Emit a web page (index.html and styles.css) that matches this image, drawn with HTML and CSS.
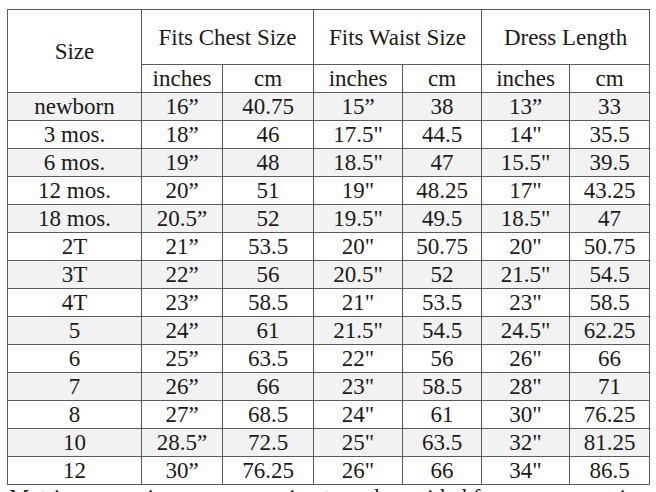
FILE: index.html
```html
<!DOCTYPE html>
<html>
<head>
<meta charset="utf-8">
<link rel="stylesheet" href="styles.css">
</head>
<body>
<div class="page">
<table class="sizes">
  <colgroup>
    <col class="c-size"><col class="c-ci"><col class="c-cc"><col class="c-wi"><col class="c-wc"><col class="c-di"><col class="c-dc">
  </colgroup>
  <thead>
    <tr class="h1">
      <th rowspan="2">Size</th>
      <th colspan="2">Fits Chest Size</th>
      <th colspan="2">Fits Waist Size</th>
      <th colspan="2">Dress Length</th>
    </tr>
    <tr class="h2">
      <th>inches</th><th>cm</th><th>inches</th><th>cm</th><th>inches</th><th>cm</th>
    </tr>
  </thead>
  <tbody>
    <tr><td>newborn</td><td>16”</td><td>40.75</td><td>15”</td><td>38</td><td>13”</td><td>33</td></tr>
    <tr><td>3 mos.</td><td>18”</td><td>46</td><td>17.5"</td><td>44.5</td><td>14"</td><td>35.5</td></tr>
    <tr><td>6 mos.</td><td>19”</td><td>48</td><td>18.5"</td><td>47</td><td>15.5"</td><td>39.5</td></tr>
    <tr><td>12 mos.</td><td>20”</td><td>51</td><td>19"</td><td>48.25</td><td>17"</td><td>43.25</td></tr>
    <tr><td>18 mos.</td><td>20.5”</td><td>52</td><td>19.5"</td><td>49.5</td><td>18.5"</td><td>47</td></tr>
    <tr><td>2T</td><td>21”</td><td>53.5</td><td>20"</td><td>50.75</td><td>20"</td><td>50.75</td></tr>
    <tr><td>3T</td><td>22”</td><td>56</td><td>20.5"</td><td>52</td><td>21.5"</td><td>54.5</td></tr>
    <tr><td>4T</td><td>23”</td><td>58.5</td><td>21"</td><td>53.5</td><td>23"</td><td>58.5</td></tr>
    <tr><td>5</td><td>24”</td><td>61</td><td>21.5"</td><td>54.5</td><td>24.5"</td><td>62.25</td></tr>
    <tr><td>6</td><td>25”</td><td>63.5</td><td>22"</td><td>56</td><td>26"</td><td>66</td></tr>
    <tr><td>7</td><td>26”</td><td>66</td><td>23"</td><td>58.5</td><td>28"</td><td>71</td></tr>
    <tr><td>8</td><td>27”</td><td>68.5</td><td>24"</td><td>61</td><td>30"</td><td>76.25</td></tr>
    <tr><td>10</td><td>28.5”</td><td>72.5</td><td>25"</td><td>63.5</td><td>32"</td><td>81.25</td></tr>
    <tr><td>12</td><td>30”</td><td>76.25</td><td>26"</td><td>66</td><td>34"</td><td>86.5</td></tr>
  </tbody>
</table>
<p class="note">Metric conversions are approximate and provided for your convenience.</p>
</div>
</body>
</html>
```

FILE: styles.css
```css
html, body {
  margin: 0;
  padding: 0;
  background: #ffffff;
  overflow: hidden;
}
.page {
  padding: 9px 0 0 7px;
  font-family: "Liberation Serif", "DejaVu Serif", serif;
  color: #1a1a1a;
}
.sizes {
  border-collapse: collapse;
  table-layout: fixed;
  width: 642px;
  font-size: 23px;
}
.c-size { width: 134px; }
.c-ci { width: 81px; }
.c-cc { width: 91px; }
.c-wi { width: 89px; }
.c-wc { width: 79px; }
.c-di { width: 88px; }
.c-dc { width: 80px; }
.sizes th, .sizes td {
  border: 1px solid #5a5a5a;
  text-align: center;
  padding: 0;
  font-weight: normal;
  white-space: nowrap;
  line-height: 27px;
}
.sizes .h1 th {
  height: 54px;
}
.sizes .h2 th {
  height: 27px;
}
.sizes td {
  height: 27px;
}
.sizes tbody tr:nth-child(odd) td {
  background: #f2f2f2;
}
.note {
  margin: 0;
  padding-left: 2px;
  font-size: 23px;
  line-height: 26px;
  white-space: nowrap;
}
```
